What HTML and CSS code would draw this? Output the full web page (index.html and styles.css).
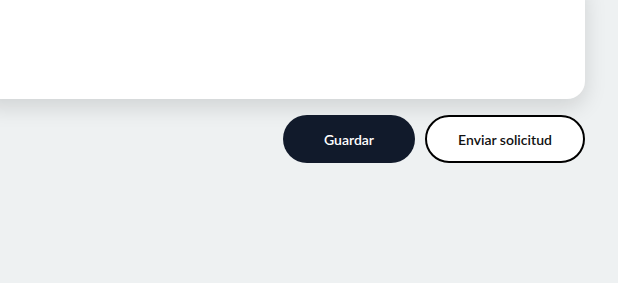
FILE: index.html
```html
<!DOCTYPE html>
<html lang="es">
<head>
  <meta charset="UTF-8" />
  <meta name="viewport" content="width=device-width, initial-scale=1.0"/>
  <title>Solicitud</title>
  <link rel="stylesheet" href="styles.css">
</head>
<body>

  <div class="page">
    <div class="card"></div>

    <div class="actions">
      <button type="button" class="btn btn-dark">Guardar</button>
      <button type="button" class="btn btn-outline">Enviar solicitud</button>
    </div>
  </div>

</body>
</html>
```

FILE: styles.css
```css
body {
  margin: 0;
  font-family: Lato, "Liberation Sans", sans-serif;
  background: #eef1f2;
  overflow: hidden;
}

.page {
  padding-right: 33px;
}

.card {
  background: white;
  height: 121px;
  margin: -22px 0 0 -22px;
  border-radius: 18px;
  box-shadow: 0 8px 22px rgba(0,0,0,0.13);
}

.actions {
  display: flex;
  justify-content: flex-end;
  gap: 10px;
  margin-top: 16px;
}

.btn {
  height: 48px;
  border-radius: 24px;
  font-family: inherit;
  font-size: 14px;
  font-weight: 600;
  cursor: pointer;
}

.btn-dark {
  width: 132px;
  border: none;
  background: #111a2b;
  color: white;
}

.btn-outline {
  width: 160px;
  border: 2px solid #000;
  background: white;
  color: #111;
}
```
